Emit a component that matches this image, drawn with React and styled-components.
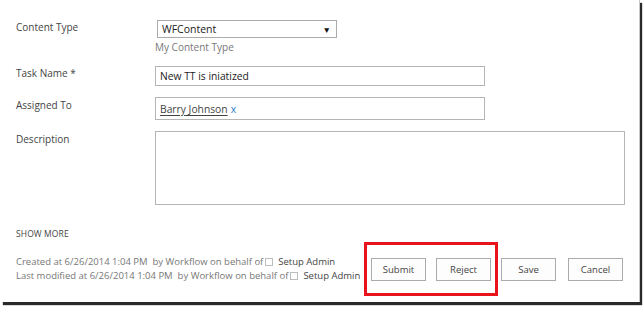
import React from 'react';
import styled, { createGlobalStyle } from 'styled-components';

const GlobalStyle = createGlobalStyle`
    html, body {
        margin: 0;
        padding: 0;
        background: #ffffff;
    }
    body {
        width: 644px;
        height: 309px;
        overflow: hidden;
        font-family: "Open Sans", "Noto Sans", "Liberation Sans", sans-serif;
    }
`;

const Card = styled.div`
    position: relative;
    width: 639px;
    height: 302px;
    background: #ffffff;
    box-shadow: 1px 0 0 #c8c8c8, 3px 3px 1px #2a2a2a;
    padding: 20px 0 0 16px;
    box-sizing: border-box;
`;

const Row = styled.div`
    display: grid;
    grid-template-columns: 139px 1fr;
    margin-bottom: ${p => p.gap || 11}px;
`;

const Label = styled.div`
    font-size: 10px;
    color: #444444;
    line-height: 14px;
    padding-top: ${p => p.top || 0}px;
`;

const Field = styled.div`
    display: flex;
    flex-direction: column;
`;

const Select = styled.div`
    width: 180px;
    height: 18px;
    margin-left: 2px;
    border: 1px solid #ababab;
    box-sizing: border-box;
    display: flex;
    align-items: center;
    justify-content: space-between;
    padding: 0 5px 0 4px;
    font-size: 10.5px;
    color: #222222;
`;

const Arrow = styled.span`
    font-size: 8.5px;
    color: #111111;
`;

const Hint = styled.div`
    font-size: 10px;
    color: #777777;
    line-height: 14px;
    margin-top: 2px;
`;

const TextBox = styled.div`
    width: ${p => p.w || 330}px;
    height: ${p => p.h || 20}px;
    border: 1px solid #b5b5b5;
    box-sizing: border-box;
    display: flex;
    align-items: ${p => (p.multi ? 'flex-start' : 'center')};
    padding: 0 4px;
    font-size: 10.3px;
    color: #222222;
`;

const Person = styled.span`
    color: #444444;
    text-decoration: underline;
    text-underline-offset: 2px;
`;

const Remove = styled.span`
    color: #2a7bc4;
    margin-left: 3px;
`;

const ShowMore = styled.div`
    margin-top: 23px;
    font-size: 8.5px;
    color: #444444;
    line-height: 12px;
    letter-spacing: 0.1px;
`;

const Footer = styled.div`
    display: flex;
    align-items: center;
    margin-top: 15px;
`;

const Meta = styled.div`
    font-size: 9.5px;
    color: #777777;
    line-height: 14px;
    width: 355px;
    white-space: nowrap;
`;

const Who = styled.span`
    color: #444444;
`;

const Box = styled.span`
    display: inline-block;
    width: 8px;
    height: 8px;
    border: 1px solid #bdbdbd;
    box-sizing: border-box;
    margin: 0 5px 0 2px;
    vertical-align: -1px;
`;

const Buttons = styled.div`
    display: flex;
`;

const Button = styled.div`
    width: 55px;
    height: 23px;
    margin-left: ${p => p.gap || 0}px;
    border: 1px solid #ababab;
    box-sizing: border-box;
    background: #fdfdfd;
    display: flex;
    align-items: center;
    justify-content: center;
    font-size: 9.5px;
    color: #444444;
`;

const Highlight = styled.div`
    position: absolute;
    left: 364px;
    top: 242px;
    width: 134px;
    height: 54px;
    border: 3px solid #e8131b;
    box-sizing: border-box;
`;

export default class App extends React.Component {
    render() {
        return (
            <>
                <GlobalStyle />
                <Card>
                    <Row gap={12}>
                        <Label top={0}>Content Type</Label>
                        <Field>
                            <Select>
                                WFContent
                                <Arrow>▼</Arrow>
                            </Select>
                            <Hint>My Content Type</Hint>
                        </Field>
                    </Row>
                    <Row>
                        <Label top={0}>Task Name *</Label>
                        <Field>
                            <TextBox>New TT is iniatized</TextBox>
                        </Field>
                    </Row>
                    <Row>
                        <Label top={1}>Assigned To</Label>
                        <Field>
                            <TextBox h={23}>
                                <Person>Barry Johnson</Person>
                                <Remove>x</Remove>
                            </TextBox>
                        </Field>
                    </Row>
                    <Row gap={0}>
                        <Label top={1}>Description</Label>
                        <Field>
                            <TextBox w={470} h={74} multi />
                        </Field>
                    </Row>
                    <ShowMore>SHOW MORE</ShowMore>
                    <Footer>
                        <Meta>
                            <div>
                                Created at 6/26/2014 1:04 PM&nbsp; by Workflow on behalf of
                                <Box />
                                <Who>Setup Admin</Who>
                            </div>
                            <div>
                                Last modified at 6/26/2014 1:04 PM&nbsp; by Workflow on behalf of
                                <Box />
                                <Who>Setup Admin</Who>
                            </div>
                        </Meta>
                        <Buttons>
                            <Button>Submit</Button>
                            <Button gap={10}>Reject</Button>
                            <Button gap={10}>Save</Button>
                            <Button gap={12}>Cancel</Button>
                        </Buttons>
                    </Footer>
                    <Highlight />
                </Card>
            </>
        );
    }
}
